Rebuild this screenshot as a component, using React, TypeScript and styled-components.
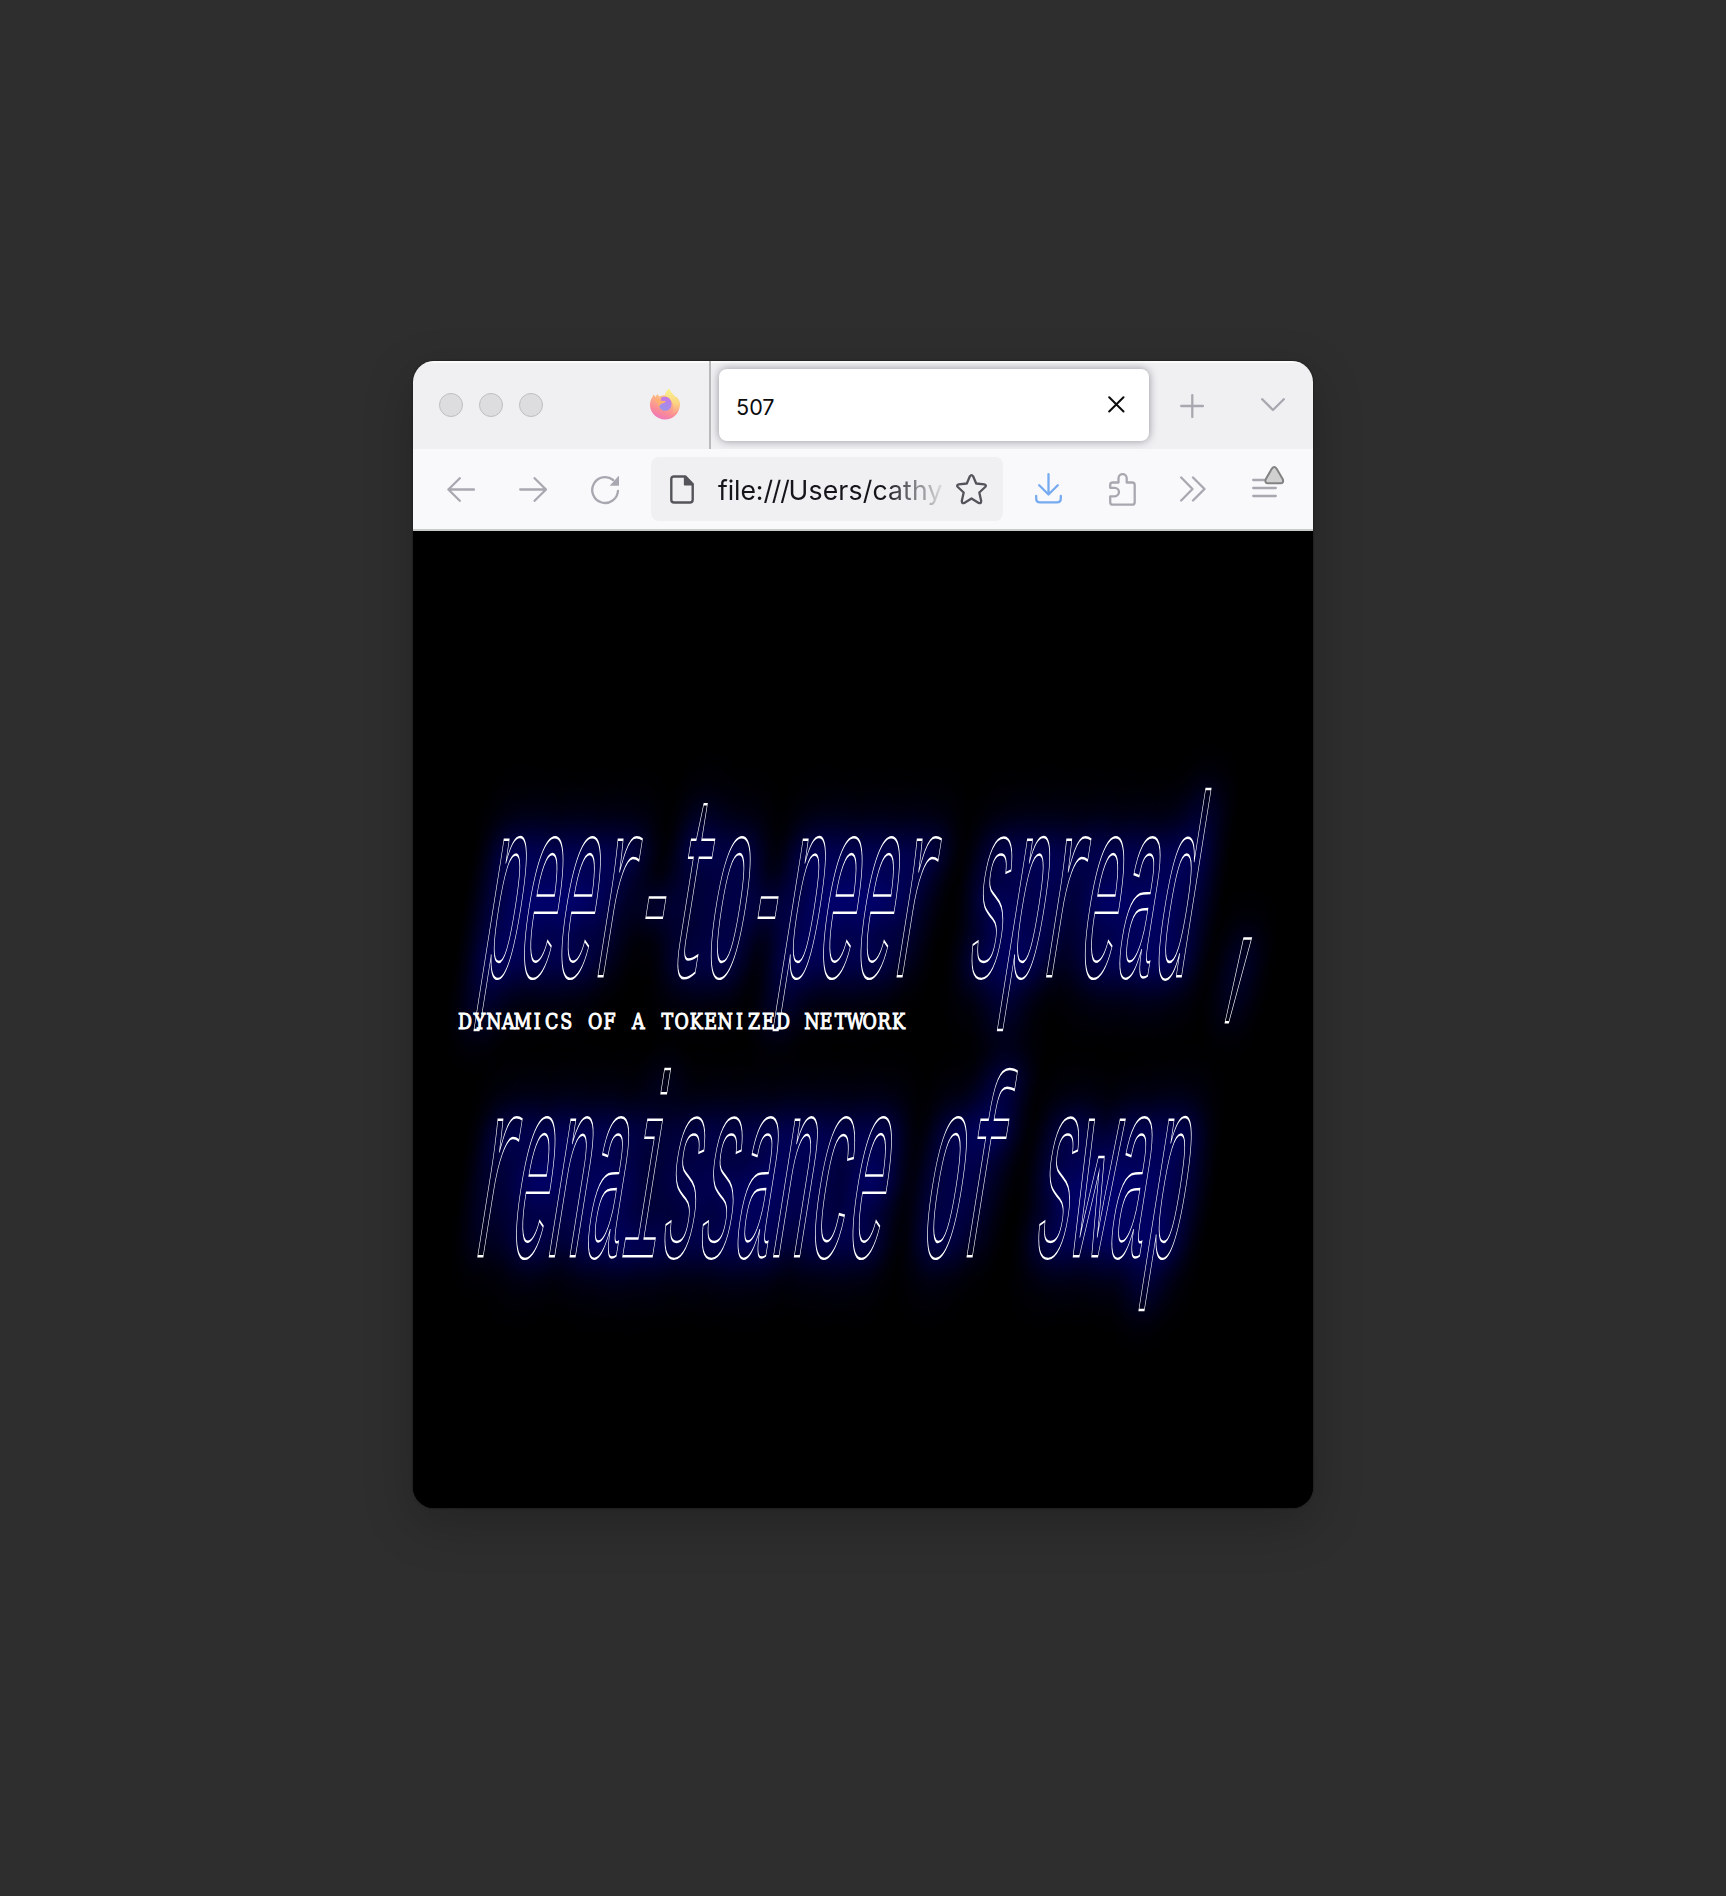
import React from "react";
import styled, { createGlobalStyle } from "styled-components";

const Global = createGlobalStyle`
  * { box-sizing: border-box; }
  body { margin: 0; background: #2e2e2e; }
`;

const Desktop = styled.main`
  height: 1896px;
  padding-top: 361px;
  display: flex;
  justify-content: center;
  align-items: flex-start;
  background: #2e2e2e;
  overflow: hidden;
  font-family: Inter, "Liberation Sans", sans-serif;
`;

const Window = styled.section`
  width: 900px;
  height: 1147px;
  display: flex;
  flex-direction: column;
  border-radius: 21px;
  overflow: hidden;
  background: #000;
  box-shadow: 0 0 2px rgba(0, 0, 0, 0.6), 0 16px 50px rgba(0, 0, 0, 0.22);
`;

const TabBar = styled.header`
  height: 88px;
  flex: none;
  display: flex;
  align-items: center;
  background: #f0f0f3;
  box-shadow: inset 0 2px 1px rgba(255, 255, 255, 0.7);
`;

const Lights = styled.div`
  display: flex;
  gap: 16px;
  padding-left: 26px;
  width: 237px;
`;

const Light = styled.span`
  width: 24px;
  height: 24px;
  border-radius: 50%;
  background: #dddddf;
  border: 1px solid #bfbfc1;
`;

const PinnedTab = styled.div`
  width: 61px;
  height: 88px;
  display: flex;
  align-items: center;
  border-right: 2px solid #bababd;
  svg { display: block; margin-top: -2px; }
`;

const Tab = styled.div`
  width: 430px;
  height: 72px;
  margin-left: 8px;
  padding: 0 24px 0 17px;
  display: flex;
  align-items: center;
  justify-content: space-between;
  border-radius: 8px;
  background: #fff;
  box-shadow: 0 0 8px rgba(70, 70, 80, 0.55);
  svg { display: block; margin-top: -1px; }
`;

const TabTitle = styled.span`
  font-size: 21.6px;
  line-height: 26px;
  padding-top: 3px;
  color: #0c0c0d;
`;

const TabActions = styled.div`
  flex: 1;
  display: flex;
  justify-content: space-between;
  align-items: center;
  padding: 0 28px 0 31px;
  svg { display: block; }
`;

const NavBar = styled.nav`
  height: 82px;
  flex: none;
  display: grid;
  grid-template-columns: 97px 72px 69px 352px 91px 56px 85px 68px;
  align-items: center;
  background: #f9f9fb;
  border-bottom: 2px solid #c9cbca;
`;

const NavCell = styled.span<{ $align?: string; $pad?: string }>`
  display: flex;
  justify-content: ${(p) => p.$align ?? "flex-end"};
  padding: ${(p) => p.$pad ?? "0"};
  svg { display: block; }
`;

const AddressBar = styled.div`
  height: 64px;
  display: flex;
  align-items: center;
  padding: 0 16px 0 19px;
  background: #f0f0f3;
  border-radius: 8px;
  svg { display: block; flex: none; }
`;

const Address = styled.span`
  flex: 1;
  margin: 2px 13px 0 24px;
  overflow: hidden;
  white-space: nowrap;
  font-size: 26.6px;
  line-height: 36px;
  letter-spacing: 0.15px;
  background: linear-gradient(90deg, #15141a 74%, rgba(21, 20, 26, 0.08) 100%);
  background-clip: text;
  -webkit-background-clip: text;
  color: transparent;
`;

const Scheme = styled.span`
  letter-spacing: -0.1px;
`;

const Slashes = styled.span`
  letter-spacing: -1.2px;
`;

const Page = styled.article`
  position: relative;
  flex: 1;
  padding: 242px 0 0 88px;
  background: #000;
`;

const Headline = styled.h1`
  margin: 0;
  font: 400 62.3px/66px "Liberation Mono", monospace;
  color: transparent;
`;

const HeadlineRow = styled.span<{ $shift: number }>`
  display: block;
  height: 280px;
  padding-left: ${(p) => p.$shift}px;
`;

const Stretched = styled.span`
  display: block;
  width: max-content;
  white-space: pre;
  transform-origin: 0 0;
  transform: skewX(-9deg) scaleY(4.15);
  -webkit-text-stroke: 0.6px #fff;
  text-shadow:
    0 0 14px rgba(0, 0, 255, 0.5),
    0 4px 16px rgba(0, 0, 255, 0.22),
    0 -4px 16px rgba(0, 0, 255, 0.22),
    0 9px 20px rgba(0, 0, 255, 0.18),
    0 -9px 20px rgba(0, 0, 255, 0.18),
    0 14px 24px rgba(0, 0, 255, 0.1),
    0 -14px 24px rgba(0, 0, 255, 0.1);
`;

const Subtitle = styled.svg`
  position: absolute;
  left: 44px;
  top: 474px;
  font: 400 22.4px "DejaVu Serif", serif;
  fill: #fff;
  stroke: #fff;
  stroke-width: 1.1px;
  text-anchor: middle;
`;

const muted = {
  fill: "none",
  stroke: "#a9a8b0",
  strokeWidth: 2.3,
  strokeLinecap: "round" as const,
  strokeLinejoin: "round" as const,
};
const dark = { ...muted, stroke: "#54545b" };

const FirefoxIcon = () => (
  <svg width="30" height="32" viewBox="0 0 30 32">
    <defs>
      <linearGradient id="body" x1="0.75" y1="0" x2="0.35" y2="1">
        <stop offset="0" stopColor="#fbf08a" />
        <stop offset="0.4" stopColor="#fcb784" />
        <stop offset="0.75" stopColor="#fa8c96" />
        <stop offset="1" stopColor="#ee76bd" />
      </linearGradient>
      <linearGradient id="tail" x1="0" y1="0" x2="0" y2="1">
        <stop offset="0" stopColor="#f8f58c" />
        <stop offset="0.6" stopColor="#fbd282" />
        <stop offset="1" stopColor="#fba58c" stopOpacity="0.4" />
      </linearGradient>
      <linearGradient id="globe" x1="0.8" y1="0" x2="0.3" y2="1">
        <stop offset="0" stopColor="#c07be6" />
        <stop offset="1" stopColor="#9796ea" />
      </linearGradient>
    </defs>
    <path d="M2.2 9.500 3.500 6.500 5.800 9 7 6 9.500 8.500C11 7.700 13 7 15 7.200 15.500 4 17.500 2 19.500.8 20 4.500 23 5.500 25 8.800L26.500 9C29 11.500 30 14 29.800 17.200 29.500 25.500 23 31.500 15 31.500S0 25 0 17C0 14 .8 11.500 2.200 9.500Z" fill="url(#body)" />
    <path d="M15 7.200C15.500 4 17.500 2 19.500.8 20 4.500 23 5.500 25 8.800L26.500 9C29 11.500 30 14 29.800 17.200 29 23 25 26 21 26 26 20 23 11 15 7.200Z" fill="url(#tail)" />
    <circle cx="15.200" cy="16.500" r="6.300" fill="url(#globe)" />
    <path d="M4.500 11.500C7 10.500 9 11 10.500 12.500L15.800 13C15.500 14.500 13.500 15.200 12 15.500 10.500 16 9.500 17.500 9 19 7.500 16.500 8.500 15.500 6.500 14 5.500 13 5 12.300 4.500 11.500Z" fill="#fdb070" />
    <path d="M11 10C12.500 8.500 16 8.300 18 9.500 20.500 11 21.500 13.500 21.500 16 20 13 17.500 11.500 15.800 13L11.500 12.500Z" fill="#c17be4" />
  </svg>
);

const CloseIcon = () => (
  <svg width="17" height="17" viewBox="0 0 17 17" fill="none" stroke="#0c0c0d" strokeWidth="2" strokeLinecap="round">
    <path d="M1.200 1.200 15.500 15.500M15.500 1.200 1.200 15.500" />
  </svg>
);

const PlusIcon = () => (
  <svg width="24" height="24" viewBox="0 0 24 24" {...muted} style={{ marginTop: 2 }}>
    <path d="M12.300 1.200V23M1.200 12H23" />
  </svg>
);

const ChevronIcon = () => (
  <svg width="24" height="14" viewBox="0 0 24 14" {...muted} style={{ marginTop: -1 }}>
    <path d="M1.200 1.200 12 12 22.800 1.200" />
  </svg>
);

const BackIcon = () => (
  <svg width="28" height="25" viewBox="0 0 28 25" {...muted}>
    <path d="M12.800 1.200 1.400 12.500 12.800 23.800M1.400 12.500H27" />
  </svg>
);

const ForwardIcon = () => (
  <svg width="28" height="25" viewBox="0 0 28 25" {...muted}>
    <path d="M15.600 1.200 27 12.500 15.600 23.800M27 12.500H1.200" />
  </svg>
);

const ReloadIcon = () => (
  <svg width="29" height="30" viewBox="0 0 29 30" {...muted}>
    <path d="M22.200 5A12.900 12.900 0 1 0 27 15.800" />
    <path d="M28 1V10.800H18.700L27.500 1Z" fill="#a9a8b0" stroke="none" />
  </svg>
);

const PageIcon = () => (
  <svg width="24" height="29" viewBox="0 0 24 29" {...dark}>
    <path d="M15.500 1.500H4.200Q1.300 1.500 1.300 4.300V24.700Q1.300 27.500 4.200 27.500H19.800Q22.700 27.500 22.700 24.700V9Z" strokeWidth="2.400" />
    <path d="M14.600 1.500V9.800H22.500Z" fill="#54545b" strokeWidth="1.500" />
  </svg>
);

const StarIcon = () => (
  <svg width="31" height="31" viewBox="0 0 31 31" {...dark}>
    <path d="M13.900 2.300Q15.500 0 17.100 2.300L20.200 9.500 28.300 10.400Q30.800 11.100 29.200 13L23.300 18.500 25.200 27.100Q25.200 30 22.700 28.900L15.500 24.500 8.300 28.900Q5.800 30 5.800 27.100L7.700 18.500 1.800 13Q.2 11.100 2.700 10.400L10.800 9.500Z" />
  </svg>
);

const DownloadIcon = () => (
  <svg width="27" height="31" viewBox="0 0 27 31" fill="none" stroke="#77abf0" strokeWidth="2.300" strokeLinecap="round" strokeLinejoin="round">
    <path d="M13.500 1.200V21.500M4.200 12.300 13.500 21.500 22.800 12.300M1.200 23V25.500Q1.200 29.300 5 29.300H22Q25.800 29.300 25.800 25.500V23" />
  </svg>
);

const PuzzleIcon = () => (
  <svg width="27" height="33" viewBox="0 0 27 33" {...muted}>
    <path d="M1.200 14.800V12Q1.200 9.500 3.700 9.500H9.500V5.200A4 4 0 0 1 17.700 5.200V9.500H23.200Q25.700 9.500 25.700 12V29.200Q25.700 31.700 23.200 31.700H3.700Q1.200 31.700 1.200 29.200V23.300H5.700A4.200 4.200 0 0 0 5.700 14.800Z" />
  </svg>
);

const MoreIcon = () => (
  <svg width="26" height="26" viewBox="0 0 26 26" {...muted}>
    <path d="M1.200 1.500 12.500 13 1.200 24.500M13 1.500 24.500 13 13 24.500" />
  </svg>
);

const MenuIcon = () => (
  <svg width="33" height="34" viewBox="0 0 33 34" {...muted}>
    <path d="M1.200 15H12M1.200 23H23.800M1.200 31H23.800" />
    <path d="M19.900 3.600Q22.200.2 24.500 3.600L30.800 14.200Q32 18.300 28.500 18.300H16Q12.500 18.300 13.700 14.200Z" fill="#d0d0d0" stroke="#828282" strokeWidth="2" />
  </svg>
);

const subtitle = "DYNAMICS OF A TOKENIZED NETWORK";
const squeeze = 0.78;
const columns = subtitle
  .split("")
  .map((_, i) => ((8 + i * 14.45) / squeeze).toFixed(2))
  .join(" ");

export default function App() {
  return (
    <>
      <Global />
      <Desktop>
        <Window>
          <TabBar>
            <Lights><Light /><Light /><Light /></Lights>
            <PinnedTab><FirefoxIcon /></PinnedTab>
            <Tab>
              <TabTitle>507</TabTitle>
              <CloseIcon />
            </Tab>
            <TabActions><PlusIcon /><ChevronIcon /></TabActions>
          </TabBar>
          <NavBar>
            <NavCell $pad="0 35px 0 0"><BackIcon /></NavCell>
            <NavCell $pad="0 35px 0 0"><ForwardIcon /></NavCell>
            <NavCell $pad="2px 31px 0 0"><ReloadIcon /></NavCell>
            <AddressBar>
              <PageIcon />
              <Address><Scheme>file:</Scheme><Slashes>///</Slashes>Users/cathy</Address>
              <StarIcon />
            </AddressBar>
            <NavCell $align="center" $pad="0 0 2px"><DownloadIcon /></NavCell>
            <NavCell $align="center"><PuzzleIcon /></NavCell>
            <NavCell $align="center"><MoreIcon /></NavCell>
            <NavCell $align="flex-start" $pad="0 0 14px 17px"><MenuIcon /></NavCell>
          </NavBar>
          <Page>
            <Headline>
              <HeadlineRow $shift={8}><Stretched>peer-to-peer spread ,</Stretched></HeadlineRow>
              <HeadlineRow $shift={0}><Stretched>renaissance of swap</Stretched></HeadlineRow>
            </Headline>
            <Subtitle width="460" height="34">
              <text y="24" x={columns} transform={`scale(${squeeze} 1)`}>{subtitle}</text>
            </Subtitle>
          </Page>
        </Window>
      </Desktop>
    </>
  );
}
